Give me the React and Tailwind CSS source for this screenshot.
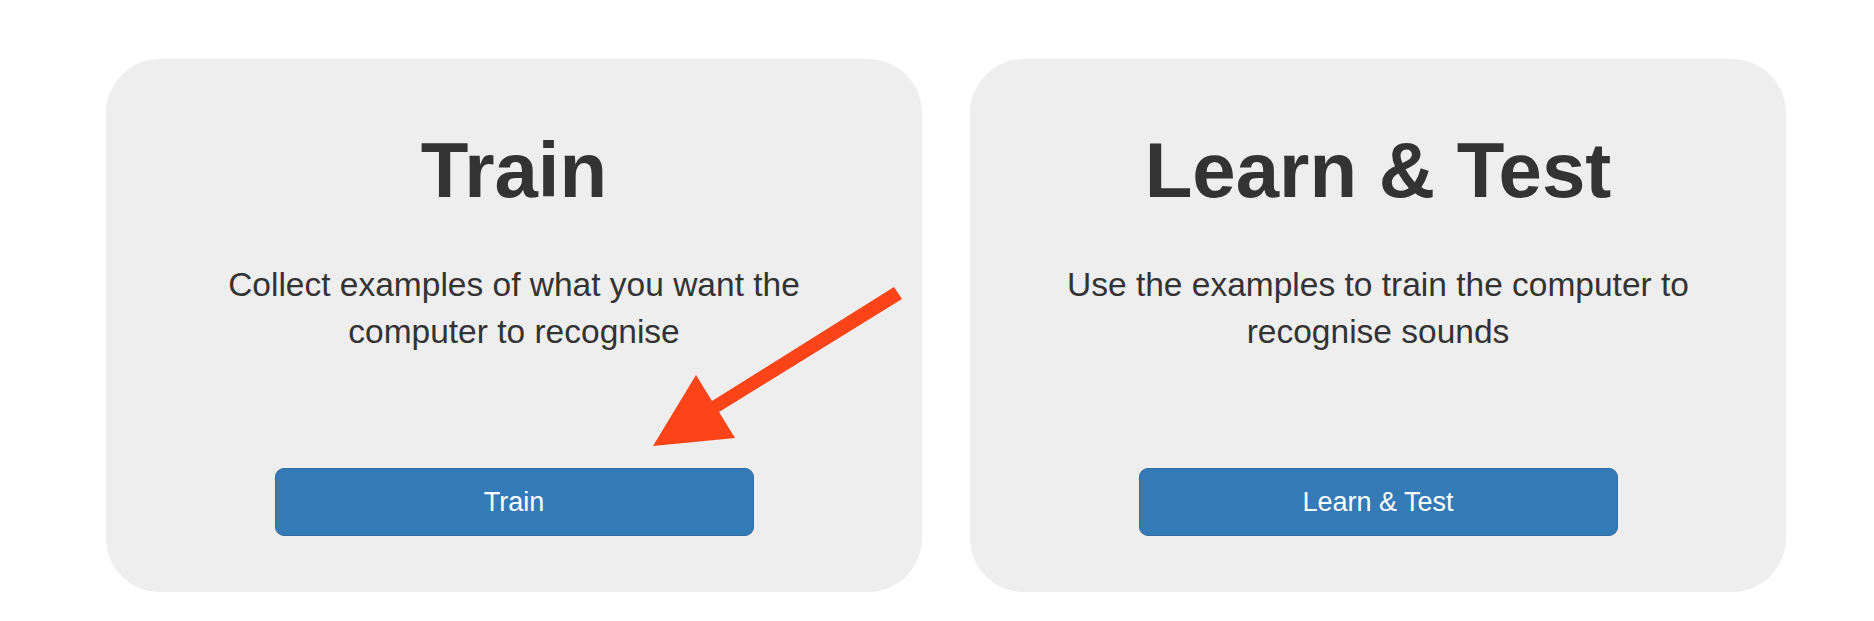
import React from 'react';

const cards = [
  {
    title: 'Train',
    text: 'Collect examples of what you want the computer to recognise',
    button: 'Train',
  },
  {
    title: 'Learn & Test',
    text: 'Use the examples to train the computer to recognise sounds',
    button: 'Learn & Test',
  },
];

const Card = ({ title, text, button }) => (
  <div className="w-[816px] h-[533px] bg-[#eeeeee] rounded-[54px] flex flex-col items-center text-center pt-[69px]">
    <h1 className="text-[78px] leading-[1.1] font-bold text-[#333333]">{title}</h1>
    <p className="mt-[47px] w-[660px] text-[33.5px] leading-[47px] text-[#333333]">{text}</p>
    <button className="mt-[113px] w-[479px] h-[68px] bg-[#337ab7] border border-[#2e6da4] rounded-[9px] text-white text-[27px]">
      {button}
    </button>
  </div>
);

const App = () => {
  return (
    <div
      className="relative w-[1874px] h-[621px] bg-white overflow-hidden"
      style={{ fontFamily: '"Liberation Sans", Arial, Helvetica, sans-serif' }}
    >
      <div className="flex gap-[48px] pl-[106px] pt-[59px]">
        {cards.map(card => (
          <Card key={card.title} {...card} />
        ))}
      </div>

      {/* Annotation arrow pointing at the Train button */}
      <svg
        className="absolute inset-0 pointer-events-none"
        width="1874"
        height="621"
        viewBox="0 0 1874 621"
      >
        <polygon
          points="894,287 902,299 719,412 735,438 653,446 696,375 712,401"
          fill="#fc4418"
        />
      </svg>
    </div>
  );
};

export default App;
